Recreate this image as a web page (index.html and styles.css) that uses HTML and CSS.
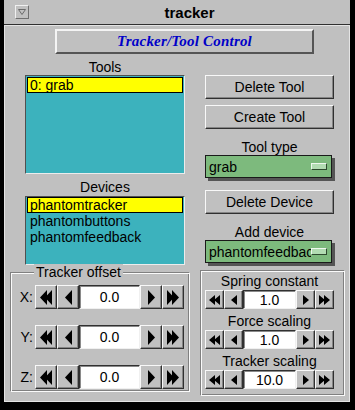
FILE: index.html
```html
<!DOCTYPE html>
<html lang="en">
<head>
    <meta charset="UTF-8">
    <title>tracker</title>
    <link rel="stylesheet" href="styles.css">
</head>
<body>
    <div class="window">
        <div class="titlebar">
            <span class="menu-btn">
                <svg width="8" height="6" viewBox="0 0 8 6"><path d="M0.5 0.5H7.5L4 5.5Z" fill="none" stroke="#6a6a6a"/></svg>
            </span>
            <span class="title">tracker</span>
        </div>

        <div class="panel">
            <div class="header-btn">Tracker/Tool Control</div>

            <div class="upper">
                <div class="lists">
                    <div class="label tools-label">Tools</div>
                    <div class="listbox tools">
                        <div class="item selected">0: grab</div>
                    </div>
                    <div class="label devices-label">Devices</div>
                    <div class="listbox devices">
                        <div class="item selected">phantomtracker</div>
                        <div class="item">phantombuttons</div>
                        <div class="item">phantomfeedback</div>
                    </div>
                </div>

                <div class="actions">
                    <div class="btn first">Delete Tool</div>
                    <div class="btn second">Create Tool</div>
                    <div class="label option-label">Tool type</div>
                    <div class="option">
                        <span class="option-text">grab</span>
                        <span class="option-mark"></span>
                    </div>
                    <div class="btn device-btn">Delete Device</div>
                    <div class="label option-label">Add device</div>
                    <div class="option">
                        <span class="option-text">phantomfeedbac</span>
                        <span class="option-mark"></span>
                    </div>
                </div>
            </div>

            <div class="lower">
                <fieldset class="offset">
                    <legend>Tracker offset</legend>
                    <div class="axis-row">
                        <span class="axis">X:</span>
                        <div class="spinner">
                            <span class="spin-btn"><svg width="12" height="15" viewBox="0 0 12 15"><path d="M0 7.5L7 0V15ZM5 7.5L12 0V15Z"/></svg></span>
                            <span class="spin-btn"><svg width="7" height="15" viewBox="0 0 7 15"><path d="M0 7.5L7 0V15Z"/></svg></span>
                            <span class="field">0.0</span>
                            <span class="spin-btn"><svg width="7" height="15" viewBox="0 0 7 15"><path d="M7 7.5L0 0V15Z"/></svg></span>
                            <span class="spin-btn"><svg width="12" height="15" viewBox="0 0 12 15"><path d="M12 7.5L5 0V15ZM7 7.5L0 0V15Z"/></svg></span>
                        </div>
                    </div>
                    <div class="axis-row">
                        <span class="axis">Y:</span>
                        <div class="spinner">
                            <span class="spin-btn"><svg width="12" height="15" viewBox="0 0 12 15"><path d="M0 7.5L7 0V15ZM5 7.5L12 0V15Z"/></svg></span>
                            <span class="spin-btn"><svg width="7" height="15" viewBox="0 0 7 15"><path d="M0 7.5L7 0V15Z"/></svg></span>
                            <span class="field">0.0</span>
                            <span class="spin-btn"><svg width="7" height="15" viewBox="0 0 7 15"><path d="M7 7.5L0 0V15Z"/></svg></span>
                            <span class="spin-btn"><svg width="12" height="15" viewBox="0 0 12 15"><path d="M12 7.5L5 0V15ZM7 7.5L0 0V15Z"/></svg></span>
                        </div>
                    </div>
                    <div class="axis-row">
                        <span class="axis">Z:</span>
                        <div class="spinner">
                            <span class="spin-btn"><svg width="12" height="15" viewBox="0 0 12 15"><path d="M0 7.5L7 0V15ZM5 7.5L12 0V15Z"/></svg></span>
                            <span class="spin-btn"><svg width="7" height="15" viewBox="0 0 7 15"><path d="M0 7.5L7 0V15Z"/></svg></span>
                            <span class="field">0.0</span>
                            <span class="spin-btn"><svg width="7" height="15" viewBox="0 0 7 15"><path d="M7 7.5L0 0V15Z"/></svg></span>
                            <span class="spin-btn"><svg width="12" height="15" viewBox="0 0 12 15"><path d="M12 7.5L5 0V15ZM7 7.5L0 0V15Z"/></svg></span>
                        </div>
                    </div>
                </fieldset>

                <div class="scales">
                    <div class="scale">
                        <div class="scale-label">Spring constant</div>
                        <div class="spinner small">
                            <span class="spin-btn"><svg width="11" height="10" viewBox="0 0 11 10"><path d="M0 5L6 0V10ZM5 5L11 0V10Z"/></svg></span>
                            <span class="spin-btn"><svg width="6" height="10" viewBox="0 0 6 10"><path d="M0 5L6 0V10Z"/></svg></span>
                            <span class="field">1.0</span>
                            <span class="spin-btn"><svg width="6" height="10" viewBox="0 0 6 10"><path d="M6 5L0 0V10Z"/></svg></span>
                            <span class="spin-btn"><svg width="11" height="10" viewBox="0 0 11 10"><path d="M11 5L5 0V10ZM6 5L0 0V10Z"/></svg></span>
                        </div>
                    </div>
                    <div class="scale">
                        <div class="scale-label">Force scaling</div>
                        <div class="spinner small">
                            <span class="spin-btn"><svg width="11" height="10" viewBox="0 0 11 10"><path d="M0 5L6 0V10ZM5 5L11 0V10Z"/></svg></span>
                            <span class="spin-btn"><svg width="6" height="10" viewBox="0 0 6 10"><path d="M0 5L6 0V10Z"/></svg></span>
                            <span class="field">1.0</span>
                            <span class="spin-btn"><svg width="6" height="10" viewBox="0 0 6 10"><path d="M6 5L0 0V10Z"/></svg></span>
                            <span class="spin-btn"><svg width="11" height="10" viewBox="0 0 11 10"><path d="M11 5L5 0V10ZM6 5L0 0V10Z"/></svg></span>
                        </div>
                    </div>
                    <div class="scale">
                        <div class="scale-label">Tracker scaling</div>
                        <div class="spinner small">
                            <span class="spin-btn"><svg width="11" height="10" viewBox="0 0 11 10"><path d="M0 5L6 0V10ZM5 5L11 0V10Z"/></svg></span>
                            <span class="spin-btn"><svg width="6" height="10" viewBox="0 0 6 10"><path d="M0 5L6 0V10Z"/></svg></span>
                            <span class="field">10.0</span>
                            <span class="spin-btn"><svg width="6" height="10" viewBox="0 0 6 10"><path d="M6 5L0 0V10Z"/></svg></span>
                            <span class="spin-btn"><svg width="11" height="10" viewBox="0 0 11 10"><path d="M11 5L5 0V10ZM6 5L0 0V10Z"/></svg></span>
                        </div>
                    </div>
                </div>
            </div>
        </div>
    </div>
</body>
</html>
```

FILE: styles.css
```css
body {
    margin: 0;
    background: #000;
    font-family: "Liberation Sans", Arial, sans-serif;
    font-size: 14px;
    color: #000;
}
.window {
    width: 355px;
    height: 410px;
    box-sizing: border-box;
    padding: 0 5px 8px 4px;
    display: flex;
    flex-direction: column;
}
.titlebar {
    height: 25px;
    box-sizing: border-box;
    background: #c0c0c0;
    border-bottom: 1px solid #303030;
    display: flex;
    align-items: center;
}
.menu-btn {
    width: 14px;
    height: 14px;
    box-sizing: border-box;
    margin-left: 11px;
    border: 1px solid;
    border-color: #f0f0f0 #707070 #707070 #f0f0f0;
    display: flex;
    align-items: center;
    justify-content: center;
}
.title {
    flex: 1;
    text-align: center;
    font-weight: bold;
    font-size: 15px;
}
.panel {
    flex: 1;
    background: #c0c0c0;
    border: 1px solid #e4e4e4;
}
.header-btn {
    margin: 3px 0 0 50px;
    width: 259px;
    height: 25px;
    box-sizing: border-box;
    border: 2px solid;
    border-color: #f4f4f4 #555 #555 #f4f4f4;
    display: flex;
    align-items: center;
    justify-content: center;
    font: italic bold 15px "Liberation Serif", "Times New Roman", serif;
    letter-spacing: 0.2px;
    color: #0000c8;
}

/* lists and buttons */
.upper {
    display: grid;
    grid-template-columns: 160px 129px;
    column-gap: 20px;
    padding-left: 20px;
}
.label {
    line-height: 16px;
    text-align: center;
}
.tools-label {
    margin-top: 5px;
}
.devices-label {
    margin-top: 5px;
}
.listbox {
    box-sizing: border-box;
    background: #3cb2bd;
    border: 1px solid;
    border-color: #505050 #ececec #ececec #505050;
    padding: 1px;
    overflow: hidden;
}
.tools {
    height: 99px;
}
.devices {
    height: 69px;
    margin-top: 1px;
    padding-top: 0;
}
.item {
    height: 16px;
    line-height: 14px;
    box-sizing: border-box;
    padding-left: 2px;
    border: 1px solid transparent;
    white-space: nowrap;
}
.item.selected {
    background: #ffff00;
    border-color: #000;
}
.actions {
    display: flex;
    flex-direction: column;
}
.btn {
    height: 24px;
    box-sizing: border-box;
    border: 1px solid;
    border-color: #f8f8f8 #303030 #303030 #f8f8f8;
    box-shadow: inset -1px -1px #858585;
    display: flex;
    align-items: center;
    justify-content: center;
}
.btn.first {
    margin-top: 21px;
}
.btn.second {
    margin-top: 6px;
}
.btn.device-btn {
    margin-top: 12px;
}
.option-label {
    margin-top: 10px;
}
.option {
    width: 127px;
    height: 23px;
    box-sizing: border-box;
    background: #7dba7d;
    border: 1px solid #1a1a1a;
    box-shadow: 3px 3px 0 #555;
    display: flex;
    align-items: center;
    padding-left: 3px;
}
.option-text {
    flex: 1;
    overflow: hidden;
    white-space: nowrap;
}
.option-mark {
    flex: none;
    width: 16px;
    height: 7px;
    box-sizing: border-box;
    margin-right: 4px;
    background: #b2dcb2;
    border: 1px solid;
    border-color: #eef8ee #2e4a2e #2e4a2e #eef8ee;
}

/* offset and scaling frames */
.lower {
    display: grid;
    grid-template-columns: 180px 145px;
    column-gap: 10px;
    padding-left: 5px;
    align-items: start;
}
.offset {
    margin: -1px 0 0;
    padding: 5px 0 2px 1px;
    min-width: 0;
    border: 1px solid;
    border-color: #808080 #fafafa #fafafa #808080;
    box-shadow: inset 1px 1px #fafafa, inset -1px -1px #808080;
}
.offset legend {
    margin-left: 22px;
    padding: 0 2px;
    line-height: 16px;
    background: #c0c0c0;
}
.axis-row {
    display: flex;
    align-items: center;
}
.axis-row + .axis-row {
    margin-top: 16px;
}
.axis {
    width: 23px;
    box-sizing: border-box;
    padding-right: 2px;
    text-align: right;
}
.spinner {
    display: flex;
}
.spin-btn {
    width: 22px;
    height: 24px;
    box-sizing: border-box;
    border: 1px solid;
    border-color: #f8f8f8 #303030 #303030 #f8f8f8;
    box-shadow: inset -1px -1px #858585;
    display: flex;
    align-items: center;
    justify-content: center;
}
.field {
    width: 61px;
    height: 24px;
    box-sizing: border-box;
    background: #fff;
    border: 1px solid;
    border-color: #303030 #f0f0f0 #f0f0f0 #303030;
    box-shadow: inset 1px 1px #8a8a8a;
    display: flex;
    align-items: center;
    justify-content: center;
}
.spinner.small .spin-btn {
    width: 19px;
    height: 19px;
}
.spinner.small .field {
    width: 53px;
    height: 19px;
}
.scales {
    margin-top: 5px;
    padding: 1px 10px 6px 4px;
    border: 1px solid;
    border-color: #808080 #fafafa #fafafa #808080;
    box-shadow: inset 1px 1px #fafafa, inset -1px -1px #808080;
}
.scale + .scale {
    margin-top: 3px;
}
.scale-label {
    line-height: 18px;
    text-align: center;
    white-space: nowrap;
}
```
